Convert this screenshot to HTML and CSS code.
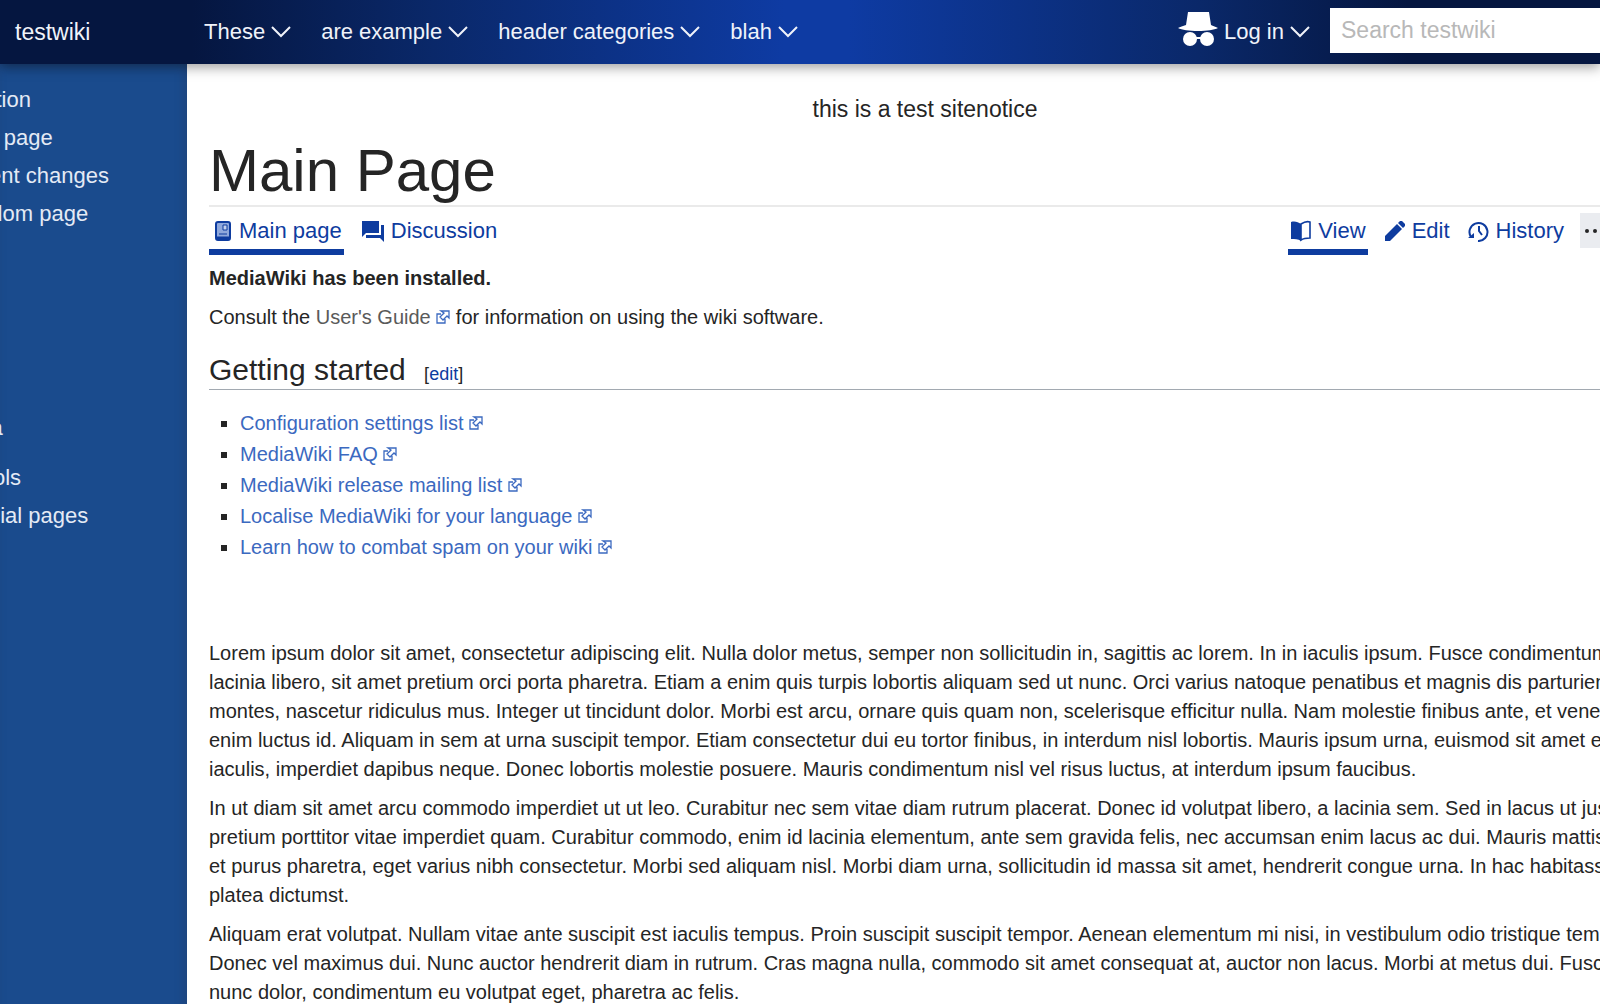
FILE: index.html
```
<!DOCTYPE html>
<html lang="en">
<head>
    <meta charset="UTF-8">
    <meta name="viewport" content="width=device-width, initial-scale=1.0">
    <title>Main Page - testwiki</title>
    <link rel="stylesheet" href="styles.css">
</head>
<body>
    <svg class="sprite" aria-hidden="true">
        <symbol id="chevron" viewBox="0 0 20 14">
            <path d="M1 2l9 9 9-9" fill="none" stroke="currentColor" stroke-width="2"/>
        </symbol>
        <symbol id="external" viewBox="0 0 14 14">
            <path d="M5 4H1v9h8V9M5 1h8v7l-2-2-4 4-3-3 4-4z" fill="none" stroke="currentColor" stroke-width="1.3"/>
        </symbol>
    </svg>
    <header class="site-header">
        <a class="site-name" href="#">testwiki</a>
        <nav class="header-nav">
            <button type="button">These <svg class="chevron"><use href="#chevron"/></svg></button>
            <button type="button">are example <svg class="chevron"><use href="#chevron"/></svg></button>
            <button type="button">header categories <svg class="chevron"><use href="#chevron"/></svg></button>
            <button type="button">blah <svg class="chevron"><use href="#chevron"/></svg></button>
        </nav>
        <button type="button" class="login">
            <svg class="login-icon" viewBox="0 0 40 36" fill="currentColor">
                <path d="M10 1h21l2 13c2 1 5 2 7 3-4 2-11 3-20 3S4 19 0 17c2-1 5-2 8-3z"/>
                <circle cx="12" cy="28" r="7"/>
                <circle cx="29" cy="28" r="7"/>
                <path d="M17 26h7v2h-7z"/>
            </svg>
            Log in <svg class="chevron"><use href="#chevron"/></svg>
        </button>
        <input class="search" type="search" placeholder="Search testwiki" aria-label="Search testwiki">
    </header>
    <div class="layout">
        <aside class="sidebar">
            <section class="portlet main-nav">
                <h3>Navigation</h3>
                <ul>
                    <li><a href="#">Main page</a></li>
                    <li><a href="#">Recent changes</a></li>
                    <li><a href="#">Random page</a></li>
                </ul>
            </section>
            <section class="portlet">
                <h3>Agenda</h3>
            </section>
            <section class="portlet">
                <h3>Wiki tools</h3>
                <ul>
                    <li><a href="#">Special pages</a></li>
                </ul>
            </section>
        </aside>
        <main class="content">
            <div class="sitenotice">this is a test sitenotice</div>
            <h1>Main Page</h1>
            <nav class="tabs">
                <a class="tab selected" href="#">
                    <svg class="icon" viewBox="0 0 22 22">
                        <rect x="5" y="2" width="14" height="18" rx="2" fill="#8fa8dc" stroke="currentColor" stroke-width="2"/>
                        <path d="M5 18h14" stroke="currentColor" stroke-width="3"/>
                        <path d="M12 5h4v5h-4zM8 14h8" fill="#c5d2ee" stroke="currentColor"/>
                    </svg>
                    Main page
                </a>
                <a class="tab" href="#">
                    <svg class="icon wide" viewBox="0 0 24 22" fill="currentColor">
                        <path d="M1 1h17v12H5l-4 4z"/>
                        <path d="M20 5h3v17l-4-4H5v-3h15z"/>
                    </svg>
                    Discussion
                </a>
                <div class="views">
                    <a class="tab selected" href="#">
                        <svg class="icon" viewBox="0 0 22 22">
                            <path d="M1 2c4-1 7 0 10 2v17c-3-2-6-2-10-2z" fill="currentColor"/>
                            <path d="M11 4c3-2 6-3 9-2v16c-3 0-6 0-9 2z" fill="none" stroke="currentColor" stroke-width="1.6"/>
                        </svg>
                        View
                    </a>
                    <a class="tab" href="#">
                        <svg class="icon" viewBox="0 0 22 22" fill="currentColor">
                            <path d="M1 21v-5L13 4l5 5L6 21z"/>
                            <path d="M14 3l2-2h2l3 3v2l-2 2z"/>
                        </svg>
                        Edit
                    </a>
                    <a class="tab" href="#">
                        <svg class="icon" viewBox="0 0 22 22" fill="none" stroke="currentColor" stroke-width="2">
                            <path d="M3 17a9 9 0 1 1 7 4M11 6v5l3 4"/>
                            <path d="M0 18l6-5v5z" fill="currentColor" stroke="none"/>
                        </svg>
                        History
                    </a>
                    <button type="button" class="more" aria-label="More">
                        <svg viewBox="0 0 26 6" fill="currentColor">
                            <circle cx="3" cy="3" r="2"/>
                            <circle cx="11" cy="3" r="2"/>
                            <circle cx="19" cy="3" r="2"/>
                        </svg>
                    </button>
                </div>
            </nav>
            <div class="article">
                <p><strong>MediaWiki has been installed.</strong></p>
                <p>Consult the <a class="visited" href="#">User's Guide <svg class="external"><use href="#external"/></svg></a> for information on using the wiki software.</p>
                <h2>Getting started <span class="edit-section">[<a href="#">edit</a>]</span></h2>
                <ul class="links">
                    <li><a href="#">Configuration settings list <svg class="external"><use href="#external"/></svg></a></li>
                    <li><a href="#">MediaWiki FAQ <svg class="external"><use href="#external"/></svg></a></li>
                    <li><a href="#">MediaWiki release mailing list <svg class="external"><use href="#external"/></svg></a></li>
                    <li><a href="#">Localise MediaWiki for your language <svg class="external"><use href="#external"/></svg></a></li>
                    <li><a href="#">Learn how to combat spam on your wiki <svg class="external"><use href="#external"/></svg></a></li>
                </ul>
                <p>Lorem ipsum dolor sit amet, consectetur adipiscing elit. Nulla dolor metus, semper non sollicitudin in, sagittis ac lorem. In in iaculis ipsum. Fusce condimentum<br>
                lacinia libero, sit amet pretium orci porta pharetra. Etiam a enim quis turpis lobortis aliquam sed ut nunc. Orci varius natoque penatibus et magnis dis parturient<br>
                montes, nascetur ridiculus mus. Integer ut tincidunt dolor. Morbi est arcu, ornare quis quam non, scelerisque efficitur nulla. Nam molestie finibus ante, et venenatis<br>
                enim luctus id. Aliquam in sem at urna suscipit tempor. Etiam consectetur dui eu tortor finibus, in interdum nisl lobortis. Mauris ipsum urna, euismod sit amet erat<br>
                iaculis, imperdiet dapibus neque. Donec lobortis molestie posuere. Mauris condimentum nisl vel risus luctus, at interdum ipsum faucibus.</p>
                <p>In ut diam sit amet arcu commodo imperdiet ut ut leo. Curabitur nec sem vitae diam rutrum placerat. Donec id volutpat libero, a lacinia sem. Sed in lacus ut justo<br>
                pretium porttitor vitae imperdiet quam. Curabitur commodo, enim id lacinia elementum, ante sem gravida felis, nec accumsan enim lacus ac dui. Mauris mattis nisi<br>
                et purus pharetra, eget varius nibh consectetur. Morbi sed aliquam nisl. Morbi diam urna, sollicitudin id massa sit amet, hendrerit congue urna. In hac habitasse<br>
                platea dictumst.</p>
                <p>Aliquam erat volutpat. Nullam vitae ante suscipit est iaculis tempus. Proin suscipit suscipit tempor. Aenean elementum mi nisi, in vestibulum odio tristique tempus.<br>
                Donec vel maximus dui. Nunc auctor hendrerit diam in rutrum. Cras magna nulla, commodo sit amet consequat at, auctor non lacus. Morbi at metus dui. Fusce<br>
                nunc dolor, condimentum eu volutpat eget, pharetra ac felis.</p>
            </div>
        </main>
    </div>
</body>
</html>
```
FILE: styles.css
```
* {
    box-sizing: border-box;
}
body {
    margin: 0;
    min-height: 100vh;
    display: flex;
    flex-direction: column;
    overflow: hidden;
    font-family: "Liberation Sans", Arial, sans-serif;
    font-size: 22px;
    color: #252525;
    background-color: #fff;
}
a {
    color: #0e3c9f;
    text-decoration: none;
}
button {
    font: inherit;
    color: inherit;
    border: none;
    padding: 0;
    background: none;
    cursor: pointer;
}
h1, h2, h3, p, ul {
    margin: 0;
    padding: 0;
    font-weight: normal;
}
.sprite {
    display: none;
}

/* header */
.site-header {
    position: relative;
    display: flex;
    align-items: center;
    height: 64px;
    padding-left: 15px;
    color: #f0f3fa;
    background: linear-gradient(to right, #051640 0%, #051640 12%, #0a2869 27%, #0e3ba3 49%, #0e3ba3 53%, #0a2869 75%, #051640 88%, #051640 100%);
    box-shadow: 0 3px 12px rgba(0, 0, 0, 0.4);
}
.site-name {
    width: 189px;
    font-size: 23px;
    color: inherit;
}
.header-nav {
    display: flex;
    gap: 30px;
    margin-right: auto;
}
.header-nav button,
.login {
    display: flex;
    align-items: center;
    gap: 6px;
    white-space: nowrap;
}
.chevron {
    width: 20px;
    height: 14px;
}
.login-icon {
    width: 40px;
    height: 36px;
    margin-bottom: 6px;
    color: #fff;
}
.login {
    margin-right: 20px;
}
.search {
    width: 270px;
    height: 45px;
    margin-bottom: 3px;
    padding: 0 11px;
    border: none;
    border-radius: 0;
    font: inherit;
    font-size: 23px;
    background-color: #fff;
}
.search::placeholder {
    color: #b8b8b8;
}

/* sidebar */
.layout {
    display: flex;
    flex: 1;
}
.sidebar {
    width: 187px;
    padding-top: 17px;
    color: #e4eaf5;
    background-color: #1a4b8d;
    box-shadow: inset -3px 0 8px rgba(40, 60, 100, 0.4);
}
.portlet {
    margin: 0 0 12px -73px;
    line-height: 38px;
    white-space: nowrap;
}
.portlet h3 {
    font-size: 22px;
}
.portlet ul {
    padding-left: 23px;
    list-style: none;
}
.portlet a {
    color: inherit;
}
.main-nav {
    min-height: 316px;
}

/* content, runs past the right edge of the window */
.content {
    flex: 1;
    min-width: 0;
    margin-right: -41px;
    padding: 30px 0 0 22px;
}
.sitenotice {
    font-size: 23px;
    line-height: 30px;
    text-align: center;
}
h1 {
    height: 83px;
    border-bottom: 2px solid #eaeaea;
    font-size: 60px;
    line-height: 94px;
}
.tabs {
    display: flex;
    gap: 15px;
    height: 48px;
    padding-right: 20px;
}
.tab {
    display: flex;
    align-items: center;
    gap: 6px;
    height: 48px;
    padding: 0 2px;
    border-top: 6px solid transparent;
    border-bottom: 6px solid transparent;
}
.tab.selected {
    border-bottom-color: #0e3c9f;
}
.icon {
    width: 22px;
    height: 22px;
}
.icon.wide {
    width: 24px;
}
.views {
    display: flex;
    gap: 14px;
    margin-left: auto;
}
.more {
    width: 41px;
    height: 35px;
    margin-top: 6px;
    padding-left: 4px;
    background-color: #eaecf0;
}
.more svg {
    display: block;
    width: 26px;
    height: 6px;
}

/* article */
.article {
    padding-top: 9px;
    font-size: 20px;
    line-height: 29px;
    white-space: nowrap;
}
.article p {
    margin-bottom: 10px;
}
.visited {
    color: #5a5a5a;
}
.external {
    width: 14px;
    height: 14px;
    color: #3b69c0;
}
h2 {
    height: 48px;
    border-bottom: 1px solid #a2a9b1;
    font-size: 30px;
    line-height: 56px;
}
.edit-section {
    margin-left: 10px;
    font-size: 18px;
}
.links {
    margin: 18px 0 76px;
    padding-left: 31px;
    line-height: 31px;
    list-style: square;
}
.links a {
    color: #3b69c0;
}
```
